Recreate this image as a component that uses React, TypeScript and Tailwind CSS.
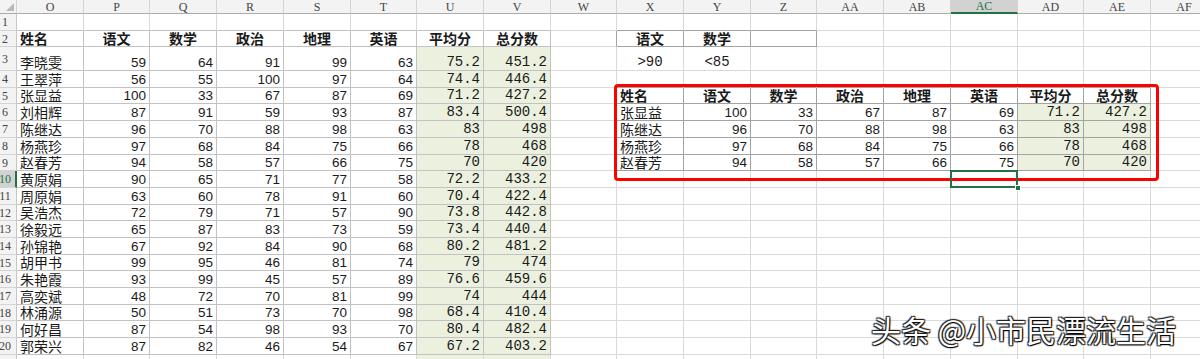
import React from 'react';

type Col = { name: string; w: string };

// column widths follow the sheet (about 66.7px each)
const COLS: Col[] = [
  { name: 'O', w: 'w-[67px]' },
  { name: 'P', w: 'w-[66px]' },
  { name: 'Q', w: 'w-[67px]' },
  { name: 'R', w: 'w-[67px]' },
  { name: 'S', w: 'w-[67px]' },
  { name: 'T', w: 'w-[66px]' },
  { name: 'U', w: 'w-[67px]' },
  { name: 'V', w: 'w-[67px]' },
  { name: 'W', w: 'w-[66px]' },
  { name: 'X', w: 'w-[67px]' },
  { name: 'Y', w: 'w-[67px]' },
  { name: 'Z', w: 'w-[66px]' },
  { name: 'AA', w: 'w-[67px]' },
  { name: 'AB', w: 'w-[67px]' },
  { name: 'AC', w: 'w-[67px]' },
  { name: 'AD', w: 'w-[66px]' },
  { name: 'AE', w: 'w-[67px]' },
  { name: 'AF', w: 'w-[67px]' },
];

const ROWS: { n: number; h: string }[] = [
  { n: 1, h: 'h-[17px]' },
  { n: 2, h: 'h-[16px]' },
  { n: 3, h: 'h-[24px]' },
  { n: 4, h: 'h-[17px]' },
  { n: 5, h: 'h-[16px]' },
  { n: 6, h: 'h-[17px]' },
  { n: 7, h: 'h-[17px]' },
  { n: 8, h: 'h-[17px]' },
  { n: 9, h: 'h-[16px]' },
  { n: 10, h: 'h-[17px]' },
  { n: 11, h: 'h-[17px]' },
  { n: 12, h: 'h-[16px]' },
  { n: 13, h: 'h-[17px]' },
  { n: 14, h: 'h-[17px]' },
  { n: 15, h: 'h-[16px]' },
  { n: 16, h: 'h-[17px]' },
  { n: 17, h: 'h-[17px]' },
  { n: 18, h: 'h-[16px]' },
  { n: 19, h: 'h-[17px]' },
  { n: 20, h: 'h-[17px]' },
  { n: 21, h: 'h-[17px]' },
];

const HEADERS = ['姓名', '语文', '数学', '政治', '地理', '英语', '平均分', '总分数'];

const students: (string | number)[][] = [
  ['李晓雯', 59, 64, 91, 99, 63, '75.2', '451.2'],
  ['王翠萍', 56, 55, 100, 97, 64, '74.4', '446.4'],
  ['张显益', 100, 33, 67, 87, 69, '71.2', '427.2'],
  ['刘相辉', 87, 91, 59, 93, 87, '83.4', '500.4'],
  ['陈继达', 96, 70, 88, 98, 63, '83', '498'],
  ['杨燕珍', 97, 68, 84, 75, 66, '78', '468'],
  ['赵春芳', 94, 58, 57, 66, 75, '70', '420'],
  ['黄原娟', 90, 65, 71, 77, 58, '72.2', '433.2'],
  ['周原娟', 63, 60, 78, 91, 60, '70.4', '422.4'],
  ['吴浩杰', 72, 79, 71, 57, 90, '73.8', '442.8'],
  ['徐毅远', 65, 87, 83, 73, 59, '73.4', '440.4'],
  ['孙锦艳', 67, 92, 84, 90, 68, '80.2', '481.2'],
  ['胡甲书', 99, 95, 46, 81, 74, '79', '474'],
  ['朱艳霞', 93, 99, 45, 57, 89, '76.6', '459.6'],
  ['高奕斌', 48, 72, 70, 81, 99, '74', '444'],
  ['林涌源', 50, 51, 73, 70, 98, '68.4', '410.4'],
  ['何好昌', 87, 54, 98, 93, 70, '80.4', '482.4'],
  ['郭荣兴', 87, 82, 46, 54, 67, '67.2', '403.2'],
];

// filtered result: 语文 >90 and 数学 <85
const filtered = students.filter((s) => ['张显益', '陈继达', '杨燕珍', '赵春芳'].includes(s[0] as string));

const inLeft = (ci: number, row: number) => ci >= 0 && ci <= 7 && row >= 2 && row <= 20;
const inRight = (ci: number, row: number) => ci >= 9 && ci <= 16 && row >= 5 && row <= 9;
const inCrit = (ci: number, row: number) => ci >= 9 && ci <= 11 && row === 2;

type Info = { text: string; align: 'l' | 'r' | 'c'; kind: 'cjk' | 'num' | 'mono'; bold: boolean; green: boolean };

function cellInfo(ci: number, row: number): Info {
  const empty: Info = { text: '', align: 'l', kind: 'cjk', bold: false, green: false };
  // left table
  if (ci <= 7) {
    const green = ci >= 6 && row >= 3;
    if (row === 2) return { text: HEADERS[ci], align: ci === 0 ? 'l' : 'c', kind: 'cjk', bold: true, green: false };
    const s = students[row - 3];
    if (s) {
      const v = s[ci];
      if (ci === 0) return { text: String(v), align: 'l', kind: 'cjk', bold: false, green };
      return { text: String(v), align: 'r', kind: ci >= 6 ? 'mono' : 'num', bold: false, green };
    }
    return { ...empty, green };
  }
  // criteria
  if (row === 2 && ci === 9) return { text: '语文', align: 'c', kind: 'cjk', bold: true, green: false };
  if (row === 2 && ci === 10) return { text: '数学', align: 'c', kind: 'cjk', bold: true, green: false };
  if (row === 3 && ci === 9) return { text: '>90', align: 'c', kind: 'mono', bold: false, green: false };
  if (row === 3 && ci === 10) return { text: '<85', align: 'c', kind: 'mono', bold: false, green: false };
  // right table
  if (inRight(ci, row)) {
    const k = ci - 9;
    if (row === 5) return { text: HEADERS[k], align: k === 0 ? 'l' : 'c', kind: 'cjk', bold: true, green: false };
    const s = filtered[row - 6];
    const green = k >= 6;
    if (k === 0) return { text: String(s[0]), align: 'l', kind: 'cjk', bold: false, green };
    return { text: String(s[k]), align: 'r', kind: k >= 6 ? 'mono' : 'num', bold: false, green };
  }
  return empty;
}

function rightColor(ci: number, row: number) {
  if (inRight(ci, row) || inRight(ci + 1, row) || inCrit(ci, row) || inCrit(ci + 1, row)) return 'border-r-[#a3a3a3]';
  if (inLeft(ci, row)) return 'border-r-[#c2c2c2]';
  return 'border-r-[#dadada]';
}

function bottomColor(ci: number, row: number) {
  if (inRight(ci, row) || inRight(ci, row + 1) || inCrit(ci, row) || inCrit(ci, row + 1)) return 'border-b-[#a3a3a3]';
  if (inLeft(ci, row) || inLeft(ci, row + 1)) return 'border-b-[#c2c2c2]';
  return 'border-b-[#dadada]';
}

const Cell = ({ ci, row }: { ci: number; row: number }) => {
  const info = cellInfo(ci, row);
  const selected = ci === 14 && row === 10;
  const justify = info.align === 'l' ? 'justify-start pl-[3px]' : info.align === 'r' ? 'justify-end pr-[3px]' : 'justify-center';
  const font =
    info.kind === 'cjk'
      ? "font-['Noto_Sans_CJK_SC',sans-serif] text-[14px]"
      : info.kind === 'num'
      ? "font-['Liberation_Sans','Noto_Sans_CJK_SC',sans-serif] text-[13.5px]"
      : "font-['Liberation_Mono','Noto_Sans_CJK_SC',monospace] text-[14px]";
  return (
    <div
      className={`relative flex h-full shrink-0 items-end border-r border-b ${COLS[ci].w} ${rightColor(ci, row)} ${bottomColor(ci, row)} ${info.green ? 'bg-[#ebf1de]' : ''} ${justify}`}
    >
      <span className={`whitespace-nowrap leading-[15px] text-[#1a1a1a] ${font} ${info.bold ? 'font-bold' : ''}`}>{info.text}</span>
      {selected && (
        <div className="absolute -top-px -left-px -right-px -bottom-px z-10 border-2 border-[#217346]">
          <div className="absolute right-[-5px] bottom-[-5px] h-[6px] w-[6px] border border-white bg-[#217346]" />
        </div>
      )}
    </div>
  );
};

const RowHeader = ({ n }: { n: number }) => {
  const active = n === 10;
  return (
    <div
      className={`flex h-full w-[17px] shrink-0 items-center overflow-hidden border-b border-b-[#d4d4d4] ${active ? 'border-r-2 border-r-[#217346] bg-[#d2d2d2] text-[#217346]' : 'border-r border-r-[#c6c6c6] bg-[#f3f3f3] text-[#444]'}`}
    >
      <div className="-ml-[10px] w-[30px] shrink-0 text-center font-['Liberation_Serif',serif] text-[12px] leading-none">{n}</div>
    </div>
  );
};

export default function App() {
  return (
    <div className="relative h-[359px] w-[1200px] overflow-hidden bg-white">
      {/* column headers */}
      <div className="flex h-[14px]">
        <div className="relative w-[17px] shrink-0 border-r border-b border-r-[#d4d4d4] border-b-[#ababab] bg-[#f3f3f3]">
          <svg className="absolute right-[2px] bottom-[2px]" width="8" height="8" viewBox="0 0 8 8">
            <path d="M8 0 L8 8 L0 8 Z" fill="#b9b9b9" />
          </svg>
        </div>
        {COLS.map((c) =>
          c.name === 'AC' ? (
            <div
              key={c.name}
              className={`flex shrink-0 items-center justify-center border-r border-b-2 border-r-[#d4d4d4] border-b-[#217346] bg-[#d2d2d2] font-['Liberation_Serif',serif] text-[12px] leading-none text-[#217346] ${c.w}`}
            >
              {c.name}
            </div>
          ) : (
            <div
              key={c.name}
              className={`flex shrink-0 items-center justify-center border-r border-b border-r-[#d4d4d4] border-b-[#ababab] bg-[#f3f3f3] font-['Liberation_Serif',serif] text-[12px] leading-none text-[#444] ${c.w}`}
            >
              {c.name}
            </div>
          )
        )}
      </div>

      {/* sheet rows */}
      {ROWS.map((r) => (
        <div key={r.n} className={`flex ${r.h}`}>
          <RowHeader n={r.n} />
          {COLS.map((c, ci) => (
            <Cell key={c.name} ci={ci} row={r.n} />
          ))}
        </div>
      ))}

      {/* red highlight around the filtered result */}
      <div className="pointer-events-none absolute top-[84px] left-[614px] h-[97px] w-[545px] rounded-[4px] border-[3px] border-[#ff0000]" />

      {/* watermark */}
      <div className="absolute top-[314px] left-[871px] font-['Noto_Sans_CJK_SC',sans-serif] text-[30px] leading-none whitespace-nowrap text-white [text-shadow:1px_1px_1px_#000,-1px_-1px_1px_#222,1px_-1px_1px_#222,-1px_1px_1px_#222]">
        头条 @小市民漂流生活
      </div>
    </div>
  );
}
